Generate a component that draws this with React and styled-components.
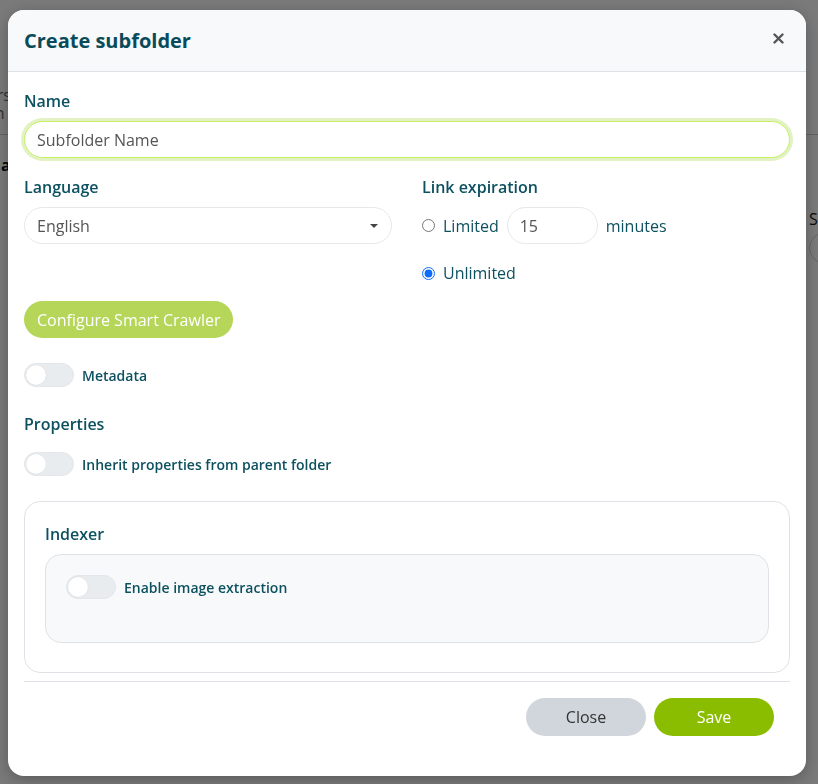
import React from 'react';
import styled, { createGlobalStyle } from 'styled-components';

const GlobalStyle = createGlobalStyle`
  * { box-sizing: border-box; }
  html, body { margin: 0; padding: 0; }
  body { font-family: "Open Sans", "Noto Sans", sans-serif; background: #f4f4f4; }
`;

const TEAL = '#0d5160';

const App = () => (
  <>
    <GlobalStyle />
    <Page>
      <PageHead>
        <Muted>Folders</Muted>
        <Muted>Admin</Muted>
      </PageHead>
      <PageRow>
        <strong>Na</strong>
        <SideField>
          <span>Se</span>
          <Ghost />
        </SideField>
      </PageRow>
    </Page>

    <Overlay>
      <Modal>
        <Header>
          <Title>Create subfolder</Title>
          <CloseIcon aria-label="Close">
            <svg width="11" height="11" viewBox="0 0 11 11">
              <path d="M1.5 1.5l8 8M9.5 1.5l-8 8" stroke="#555" strokeWidth="2.4" strokeLinecap="round" />
            </svg>
          </CloseIcon>
        </Header>

        <Body>
          <Label>Name</Label>
          <TextInput $focused defaultValue="Subfolder Name" />

          <Columns>
            <div>
              <Label>Language</Label>
              <Select>
                <span>English</span>
                <svg width="10" height="6" viewBox="0 0 10 6"><path d="M1 1h8L5 5z" fill="#444" /></svg>
              </Select>
            </div>
            <div>
              <Label>Link expiration</Label>
              <RadioRow>
                <Radio type="radio" name="exp" />
                <RadioText>Limited</RadioText>
                <NumberInput defaultValue="15" />
                <RadioText>minutes</RadioText>
              </RadioRow>
              <RadioRow $small>
                <Radio type="radio" name="exp" defaultChecked />
                <RadioText>Unlimited</RadioText>
              </RadioRow>
            </div>
          </Columns>

          <CrawlerButton>Configure Smart Crawler</CrawlerButton>

          <ToggleRow $mt={25}>
            <Switch />
            <ToggleLabel>Metadata</ToggleLabel>
          </ToggleRow>

          <Label $mt={25}>Properties</Label>
          <ToggleRow $mt={16}>
            <Switch />
            <ToggleLabel>Inherit properties from parent folder</ToggleLabel>
          </ToggleRow>

          <Card>
            <Label>Indexer</Label>
            <InnerBox>
              <ToggleRow>
                <Switch />
                <ToggleLabel>Enable image extraction</ToggleLabel>
              </ToggleRow>
            </InnerBox>
          </Card>
        </Body>

        <Footer>
          <ActionButton $variant="secondary">Close</ActionButton>
          <ActionButton $variant="primary">Save</ActionButton>
        </Footer>
      </Modal>
    </Overlay>
  </>
);

export default App;

// --- CSS ---
const Page = styled.div`
  height: 784px; overflow: hidden; padding-top: 86px; color: #444; font-size: 16px;
`;
const PageHead = styled.div`
  display: flex; flex-direction: column; align-items: flex-start; margin-left: -44px;
  padding-bottom: 12px; border-bottom: 1px solid #c4c4c4;
`;
const Muted = styled.span`color: #666; line-height: 18px;`;
const PageRow = styled.div`
  display: flex; justify-content: space-between; margin: 19px -31px 0 -12px; color: #111;
`;
const SideField = styled.div`
  display: flex; flex-direction: column; gap: 2px; margin-top: 54px; width: 40px;
`;
const Ghost = styled.div`height: 32px; border: 1px solid #ccc; border-radius: 16px 0 0 16px;`;

const Overlay = styled.div`
  position: fixed; inset: 0; background: rgba(0, 0, 0, 0.5);
  padding: 10px 12px 8px 8px;
`;
const Modal = styled.div`
  background: #fff; border-radius: 16px; overflow: hidden; height: 766px;
  display: flex; flex-direction: column;
  box-shadow: 0 4px 16px rgba(0, 0, 0, 0.25);
`;
const Header = styled.div`
  height: 62px; flex-shrink: 0; background: #f8f9fa; border-bottom: 1px solid #dee2e6;
  display: flex; align-items: center; justify-content: space-between; padding: 0 18px 0 16px;
`;
const Title = styled.h1`
  margin: 0; font-size: 20px; font-weight: 700; color: #0a4b5a; line-height: 1;
`;
const CloseIcon = styled.button`
  border: 0; background: none; padding: 4px; display: flex; cursor: pointer; margin-top: -4px;
`;
const Body = styled.div`
  padding: 17px 16px 0 16px; display: flex; flex-direction: column; align-items: flex-start;
`;
const Label = styled.div`
  font-size: 16px; font-weight: 600; color: ${TEAL}; line-height: 24px;
  margin-top: ${p => p.$mt || 0}px;
`;
const TextInput = styled.input`
  width: 100%; height: 37px; margin-top: 8px; border-radius: 999px; padding: 0 12px;
  font: 16px "Open Sans", sans-serif; color: #555; outline: none;
  border: 1px solid ${p => (p.$focused ? '#c4ef66' : '#e5e7ea')};
  box-shadow: ${p => (p.$focused ? '0 0 0 3px rgba(190, 226, 120, 0.45)' : 'none')};
`;
const Columns = styled.div`
  width: 100%; display: grid; grid-template-columns: 1fr 1fr; column-gap: 30px; margin-top: 17px;
`;
const Select = styled.div`
  margin-top: 8px; height: 37px; border: 1px solid #e5e7ea; border-radius: 999px;
  display: flex; align-items: center; justify-content: space-between; padding: 0 12px;
  font-size: 16px; color: #555;
`;
const RadioRow = styled.label`
  display: flex; align-items: center; gap: 8px; margin-top: ${p => (p.$small ? 17 : 8)}px;
  height: ${p => (p.$small ? 24 : 37)}px;
`;
const Radio = styled.input`
  width: 13px; height: 13px; margin: 0; accent-color: #0d6efd;
`;
const RadioText = styled.span`font-size: 16px; color: ${TEAL};`;
const NumberInput = styled.input`
  width: 91px; height: 37px; border: 1px solid #e5e7ea; border-radius: 999px; padding: 0 12px;
  font: 16px "Open Sans", sans-serif; color: #555; outline: none;
`;
const CrawlerButton = styled.button`
  margin-top: 16px; height: 37px; padding: 0 13px; border: 0; border-radius: 999px;
  background: #b5d658; color: #fff; font: 500 16px "Open Sans", sans-serif; cursor: pointer;
`;
const ToggleRow = styled.label`
  display: flex; align-items: center; gap: 8px; margin-top: ${p => p.$mt || 0}px;
`;
const Switch = styled.span`
  width: 50px; height: 24px; border-radius: 999px; background: #e9ecef; border: 1px solid #e3e6ea;
  display: flex; align-items: center; padding: 1px;
  &::before {
    content: ''; width: 20px; height: 20px; border-radius: 50%; background: #fff;
    box-shadow: 0 0 1px rgba(0, 0, 0, 0.15);
  }
`;
const ToggleLabel = styled.span`font-size: 14px; font-weight: 600; color: ${TEAL};`;
const Card = styled.div`
  width: 100%; margin-top: 25px; border: 1px solid #dee2e6; border-radius: 16px;
  padding: 20px 20px 29px 20px;
`;
const InnerBox = styled.div`
  margin-top: 8px; background: #f8f9fa; border: 1px solid #dee2e6; border-radius: 16px;
  padding: 20px 20px 43px 20px;
`;
const Footer = styled.div`
  margin: 8px 16px 0 16px; padding: 16px 16px 0 0; border-top: 1px solid #dee2e6;
  display: flex; justify-content: flex-end; gap: 8px;
`;
const ActionButton = styled.button`
  width: 120px; height: 38px; border: 0; border-radius: 999px; cursor: pointer;
  font: 16px "Open Sans", sans-serif;
  background: ${p => (p.$variant === 'primary' ? '#8abd00' : '#d1d6dd')};
  color: ${p => (p.$variant === 'primary' ? '#fff' : '#333')};
`;
